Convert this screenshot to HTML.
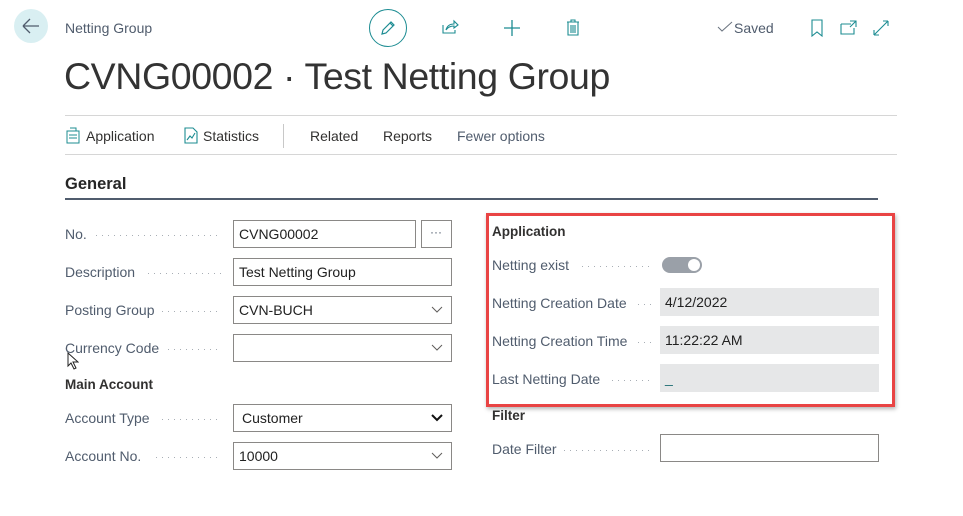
<!DOCTYPE html><html><head><style>
body{margin:0;width:963px;height:516px;background:#fff;font-family:"Liberation Sans",sans-serif;position:relative;overflow:hidden;color:#212121}
.a{position:absolute;white-space:nowrap}
.lbl{position:absolute;font-size:14px;color:#505c6d;white-space:nowrap}
.dots{position:absolute;height:1px;background:repeating-linear-gradient(to right,#a8aeb5 0 1px,transparent 1px 6px)}
.in{position:absolute;box-sizing:border-box;border:1px solid #8a8886;height:28px;font-size:14px;padding:5px 0 0 5px;color:#212121;background:#fff}
.g{position:absolute;box-sizing:border-box;height:28px;background:#e6e7e8;font-size:14px;padding:6px 0 0 5px;color:#212121}
.chev{position:absolute;right:8px;top:9px}
.h{position:absolute;font-size:13.5px;font-weight:bold;color:#323130}
</style></head><body>
<div class="a" style="left:14px;top:9px;width:34px;height:34px;border-radius:50%;background:#d9eff2"></div>
<svg class="a" style="left:21px;top:17px" width="20" height="18"><path d="M2 9H18M2 9L9 2M2 9L9 16" stroke="#505c6d" stroke-width="1.3" fill="none"/></svg>
<div class="a" style="left:65px;top:20px;font-size:14px;color:#505c6d">Netting Group</div>
<div class="a" style="left:64px;top:55px;font-size:37.5px;font-weight:300;color:#333;letter-spacing:-0.4px">CVNG00002 · Test Netting Group</div>
<div class="a" style="left:369px;top:9px;width:36px;height:36px;border:1px solid #1c8c92;border-radius:50%"></div>
<svg class="a" style="left:379px;top:19px" width="18" height="18"><path d="M3 15L4 11L12 3L15 6L7 14Z M11 4L14 7" stroke="#1c8c92" stroke-width="1.2" fill="none"/></svg>
<svg class="a" style="left:441px;top:19px" width="18" height="16"><path d="M2 6V14H14V11 M5 11C6 7 9 5 13 5V2L17 6L13 9V7C10 7 7 8 5 11Z" stroke="#1c8c92" stroke-width="1.1" fill="none"/></svg>
<svg class="a" style="left:503px;top:19px" width="18" height="18"><path d="M9 1V17M1 9H17" stroke="#1c8c92" stroke-width="1.3"/></svg>
<svg class="a" style="left:566px;top:19px" width="14" height="17"><path d="M1 3H13M5 3V1H9V3M2 3V16H12V3M5 6V14M7 6V14M9 6V14" stroke="#1c8c92" stroke-width="1.1" fill="none"/></svg>
<svg class="a" style="left:717px;top:21px" width="16" height="12"><path d="M1 6L5 10L15 1" stroke="#6b7480" stroke-width="1" fill="none"/></svg>
<div class="a" style="left:734px;top:20px;font-size:14px;color:#505c6d">Saved</div>
<svg class="a" style="left:810px;top:19px" width="14" height="18"><path d="M2 1H12V17L7 13L2 17Z" stroke="#1c8c92" stroke-width="1.1" fill="none"/></svg>
<svg class="a" style="left:840px;top:20px" width="18" height="16"><path d="M1 4H11M1 4V14H14V8 M10 1H16V7M16 1L10 7" stroke="#1c8c92" stroke-width="1.1" fill="none"/></svg>
<svg class="a" style="left:872px;top:19px" width="18" height="18"><path d="M2 16L16 2M2 16V11M2 16H7M16 2H11M16 2V7" stroke="#1c8c92" stroke-width="1.1" fill="none"/></svg>
<div class="a" style="left:65px;top:115px;width:832px;border-top:1px solid #d6d6d6"></div>
<div class="a" style="left:65px;top:154px;width:832px;border-top:1px solid #d6d6d6"></div>
<svg class="a" style="left:66px;top:127px" width="15" height="17"><rect x="1" y="4" width="12" height="12" stroke="#1c8c92" fill="none"/><path d="M3 8H11M3 11H11M4 1H10V4" stroke="#1c8c92" fill="none"/></svg>
<div class="a" style="left:86px;top:128px;font-size:14px;color:#323130">Application</div>
<svg class="a" style="left:184px;top:127px" width="14" height="17"><path d="M1 1H9L13 5V16H1Z M3 13L6 9L8 11L11 6" stroke="#1c8c92" stroke-width="1.1" fill="none"/></svg>
<div class="a" style="left:203px;top:128px;font-size:14px;color:#323130">Statistics</div>
<div class="a" style="left:283px;top:124px;height:24px;border-left:1px solid #c8c8c8"></div>
<div class="a" style="left:310px;top:128px;font-size:14px;color:#323130">Related</div>
<div class="a" style="left:383px;top:128px;font-size:14px;color:#323130">Reports</div>
<div class="a" style="left:457px;top:128px;font-size:14px;color:#505c6d">Fewer options</div>
<div class="a" style="left:65px;top:175px;font-size:16.5px;font-weight:bold;color:#262626">General</div>
<div class="a" style="left:65px;top:198px;width:813px;border-top:2px solid #505c6d"></div>

<div class="lbl" style="left:65px;top:226px">No.</div><div class="dots" style="left:96px;top:235px;width:126px"></div>
<div class="in" style="left:233px;top:220px;width:183px">CVNG00002</div>
<div class="in" style="left:421px;top:220px;width:31px;padding:4px 0 0 8px;color:#505c6d;font-size:12px">···</div>
<div class="lbl" style="left:65px;top:264px">Description</div><div class="dots" style="left:148px;top:273px;width:74px"></div>
<div class="in" style="left:233px;top:258px;width:219px">Test Netting Group</div>
<div class="lbl" style="left:65px;top:302px">Posting Group</div><div class="dots" style="left:162px;top:311px;width:60px"></div>
<div class="in" style="left:233px;top:296px;width:219px">CVN-BUCH<svg class="chev" width="12" height="8"><path d="M1 1L6 6L11 1" stroke="#605e5c" fill="none"/></svg></div>
<div class="lbl" style="left:65px;top:340px">Currency Code</div><div class="dots" style="left:168px;top:349px;width:54px"></div>
<div class="in" style="left:233px;top:334px;width:219px"><svg class="chev" width="12" height="8"><path d="M1 1L6 6L11 1" stroke="#605e5c" fill="none"/></svg></div>
<svg class="a" style="left:67px;top:352px" width="12" height="18"><path d="M1 1V14L4 11L7 17L9 16L6 10H11Z" stroke="#222" fill="#fff"/></svg>
<div class="h" style="left:65px;top:377px">Main Account</div>
<div class="lbl" style="left:65px;top:410px">Account Type</div><div class="dots" style="left:162px;top:419px;width:60px"></div>
<div class="in" style="left:233px;top:404px;width:219px;padding-left:8px">Customer<svg class="chev" width="12" height="8"><path d="M1 1L6 6L11 1" stroke="#111" stroke-width="2" fill="none"/></svg></div>
<div class="lbl" style="left:65px;top:448px">Account No.</div><div class="dots" style="left:156px;top:457px;width:66px"></div>
<div class="in" style="left:233px;top:442px;width:219px">10000<svg class="chev" width="12" height="8"><path d="M1 1L6 6L11 1" stroke="#605e5c" fill="none"/></svg></div>

<div class="a" style="left:486px;top:213px;width:403px;height:188px;border:3px solid #e94444;box-shadow:1px 2px 4px rgba(0,0,0,.3)"></div>
<div class="h" style="left:492px;top:224px">Application</div>
<div class="lbl" style="left:492px;top:257px">Netting exist</div><div class="dots" style="left:582px;top:266px;width:70px"></div>
<div class="a" style="left:662px;top:257px;width:40px;height:16px;border-radius:8px;background:#9aa0a8"></div>
<div class="a" style="left:688px;top:259px;width:12px;height:12px;border-radius:50%;background:#fff"></div>
<div class="lbl" style="left:492px;top:295px">Netting Creation Date</div><div class="dots" style="left:638px;top:304px;width:14px"></div>
<div class="g" style="left:660px;top:288px;width:219px">4/12/2022</div>
<div class="lbl" style="left:492px;top:333px">Netting Creation Time</div><div class="dots" style="left:638px;top:342px;width:14px"></div>
<div class="g" style="left:660px;top:326px;width:219px">11:22:22 AM</div>
<div class="lbl" style="left:492px;top:371px">Last Netting Date</div><div class="dots" style="left:612px;top:380px;width:40px"></div>
<div class="g" style="left:660px;top:364px;width:219px;color:#1c6c72">_</div>
<div class="h" style="left:492px;top:408px">Filter</div>
<div class="lbl" style="left:492px;top:441px">Date Filter</div><div class="dots" style="left:564px;top:450px;width:88px"></div>
<div class="in" style="left:660px;top:434px;width:219px"></div>
</body></html>
